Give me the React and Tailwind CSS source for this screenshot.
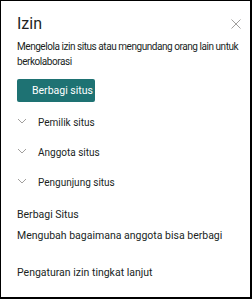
import React from 'react';

const groups = ['Pemilik situs', 'Anggota situs', 'Pengunjung situs'];

function Chevron() {
  return (
    <svg width="10" height="6" viewBox="0 0 10 6" className="shrink-0">
      <path d="M1 1 L5 5 L9 1" fill="none" stroke="#a19f9d" strokeWidth="1" />
    </svg>
  );
}

function App() {
  return (
    <div
      className="w-[252px] h-[299px] bg-white border-l border-t border-r-2 border-b-2 border-black text-[#201f1e] overflow-hidden"
      style={{ fontFamily: 'Roboto, "Open Sans", sans-serif' }}
    >
      <div className="flex items-center justify-between pl-4 pr-[6px] pt-[12px]">
        <h1 className="text-[16px] leading-[22px] font-normal">Izin</h1>
        <svg width="10" height="10" viewBox="0 0 10 10" className="mr-[3px]">
          <path d="M0.5 0.5 L9.5 9.5 M9.5 0.5 L0.5 9.5" stroke="#a19f9d" strokeWidth="1" />
        </svg>
      </div>

      <p className="pl-4 mt-[4px] text-[10px] leading-[15px] tracking-[-0.45px]">
        Mengelola izin situs atau mengundang orang lain untuk berkolaborasi
      </p>

      <div className="pl-4 mt-[8px]">
        <button className="w-[78px] h-[23px] rounded-[2px] bg-[#1e7273] text-white text-[10.5px] pl-[15px] text-left whitespace-nowrap">
          Berbagi situs
        </button>
      </div>

      <div className="flex flex-col mt-[6px]">
        {groups.map((g) => (
          <div key={g} className="flex items-center h-[30px] pl-4">
            <div className="w-[21px] -mt-[4px]">
              <Chevron />
            </div>
            <span className="text-[10px] leading-[14px]">{g}</span>
          </div>
        ))}
      </div>

      <div className="pl-4 mt-[9px] text-[10.5px]">
        <div className="leading-[15px]">Berbagi Situs</div>
        <div className="leading-[15px] mt-[6px]">Mengubah bagaimana anggota bisa berbagi</div>
        <div className="leading-[15px] mt-[22px]">Pengaturan izin tingkat lanjut</div>
      </div>
    </div>
  );
}

export default App;
